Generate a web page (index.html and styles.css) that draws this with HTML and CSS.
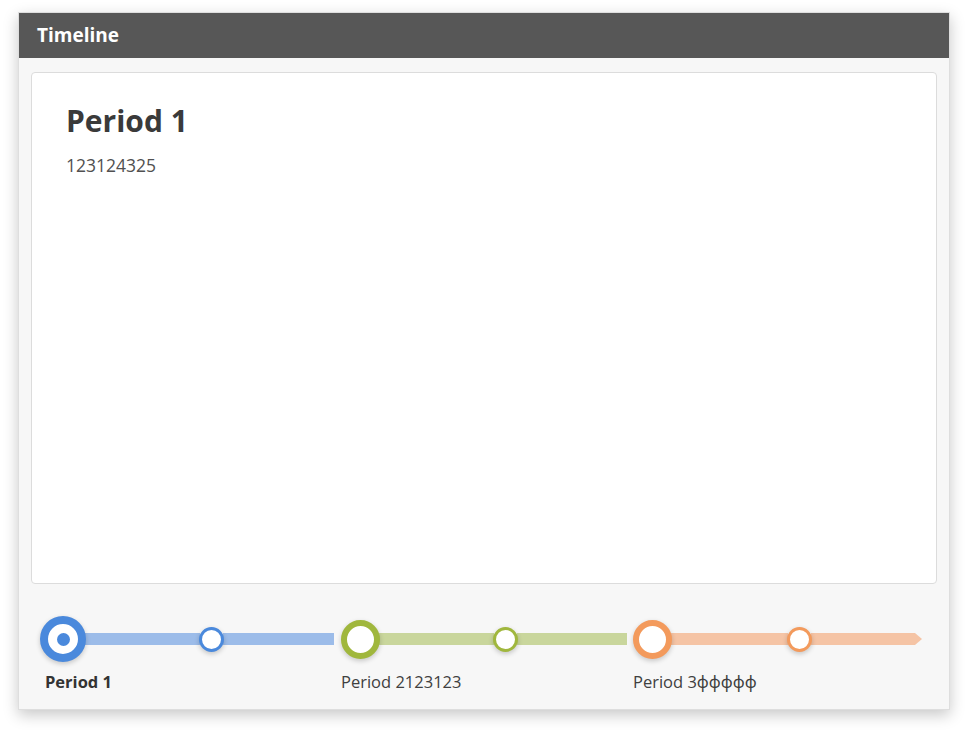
FILE: index.html
```html
<!DOCTYPE html>
<html lang="en">
<head>
<meta charset="utf-8">
<title>Timeline</title>
<link rel="stylesheet" href="styles.css">
</head>
<body>
<div class="panel">
  <div class="panel-header">Timeline</div>
  <div class="panel-body">
    <div class="card">
      <h1 class="card-title">Period 1</h1>
      <p class="card-text">123124325</p>
    </div>
    <div class="timeline">
      <div class="segment seg-blue seg-1">
        <div class="track">
          <span class="node node-big node-active"><span class="dot"></span></span>
          <span class="bar bar-first"></span>
          <span class="node node-small"></span>
          <span class="bar"></span>
        </div>
        <div class="label label-active">Period 1</div>
      </div>
      <div class="segment seg-green seg-2">
        <div class="track">
          <span class="node node-big"></span>
          <span class="bar bar-first"></span>
          <span class="node node-small"></span>
          <span class="bar"></span>
        </div>
        <div class="label">Period 2123123</div>
      </div>
      <div class="segment seg-orange seg-3">
        <div class="track">
          <span class="node node-big"></span>
          <span class="bar bar-first bar-long"></span>
          <span class="node node-small"></span>
          <span class="bar"></span>
          <span class="arrow"></span>
        </div>
        <div class="label">Period 3ϕϕϕϕϕ</div>
      </div>
    </div>
  </div>
</div>
</body>
</html>
```

FILE: styles.css
```css
html, body {
  margin: 0;
  padding: 0;
  background: #ffffff;
}
body {
  padding: 12px 18px 24px 18px;
  font-family: "Open Sans", "Noto Sans", sans-serif;
  color: #3d3d3d;
}
.panel {
  width: 932px;
  height: 698px;
  background: #f7f7f7;
  box-shadow: 0 5px 14px rgba(0, 0, 0, 0.22);
  border: 1px solid #dedede;
  box-sizing: border-box;
  display: flex;
  flex-direction: column;
}
.panel-header {
  height: 45px;
  background: #575757;
  color: #ffffff;
  font-weight: 700;
  font-size: 19px;
  line-height: 45px;
  padding-left: 18px;
  flex: none;
}
.panel-body {
  padding: 14px 12px 0 12px;
}
.card {
  height: 512px;
  box-sizing: border-box;
  background: #ffffff;
  border: 1px solid #dcdcdc;
  border-radius: 4px;
  padding: 27px 34px;
}
.card-title {
  margin: 0;
  font-size: 30px;
  font-weight: 700;
  line-height: 42px;
  color: #3a3a3a;
}
.card-text {
  margin: 11px 0 0 0;
  font-size: 17.5px;
  line-height: 24px;
  color: #505050;
}
.timeline {
  display: flex;
  padding: 32px 0 0 9px;
}
.segment {
  display: flex;
  flex-direction: column;
  flex: none;
}
.seg-1 { width: 294px; margin-right: 7px; }
.seg-2 { width: 286px; margin-right: 6px; }
.seg-3 { width: 289px; }
.track {
  display: flex;
  align-items: center;
  height: 46px;
}
.bar {
  flex: 1;
  height: 12px;
  background: var(--bar);
}
.bar-first {
  flex: none;
  width: 115px;
}
.bar-long {
  width: 117px;
}
.node {
  flex: none;
  box-sizing: border-box;
  border-radius: 50%;
  background: #ffffff;
  border: 4px solid var(--ring);
  box-shadow: 0 2px 5px rgba(0, 0, 0, 0.2);
  position: relative;
  z-index: 1;
  display: flex;
  align-items: center;
  justify-content: center;
}
.node-big {
  width: 39px;
  height: 39px;
  border-width: 6px;
  margin-right: -1px;
}
.node-big.node-active {
  width: 46px;
  height: 46px;
  border-width: 8px;
}
.node-small {
  width: 25px;
  height: 25px;
  border-width: 3.5px;
  margin: 0 -1px;
}
.dot {
  width: 13px;
  height: 13px;
  border-radius: 50%;
  background: var(--ring);
}
.arrow {
  flex: none;
  width: 0;
  height: 0;
  border-top: 6px solid transparent;
  border-bottom: 6px solid transparent;
  border-left: 7px solid var(--bar);
}
.seg-blue { --ring: #4a89dc; --bar: #9cbce9; }
.seg-green { --ring: #a0b73d; --bar: #c9d69c; }
.seg-orange { --ring: #f39a5c; --bar: #f5c4a5; }
.label {
  margin-top: 8px;
  font-size: 16.5px;
  line-height: 24px;
  color: #404040;
}
.label-active {
  font-weight: 700;
  padding-left: 5px;
  color: #333333;
}
```
